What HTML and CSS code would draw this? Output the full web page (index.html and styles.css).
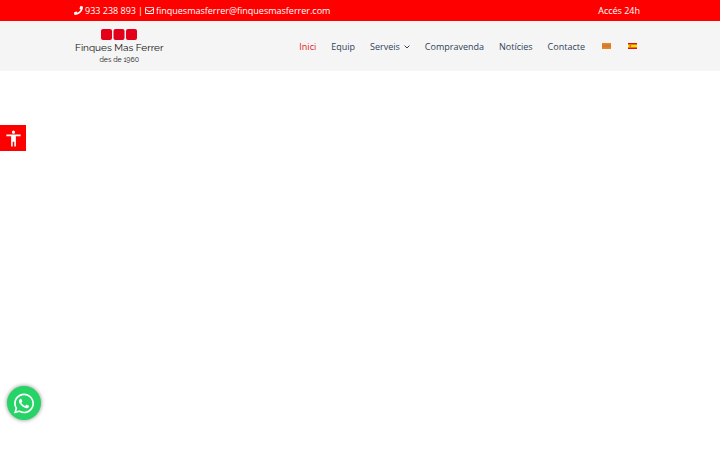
FILE: index.html
```html
<!DOCTYPE html>
<html lang="ca">
<head>
<meta charset="utf-8">
<meta name="viewport" content="width=device-width, initial-scale=1">
<title>Finques Mas Ferrer</title>
<link rel="stylesheet" href="styles.css">
</head>
<body>
<div class="topbar">
  <div class="contact">
    <a href="tel:933238893"><svg class="icon" viewBox="0 0 512 512" aria-hidden="true"><path d="M493.4 24.6l-104-24c-11.3-2.6-22.9 3.3-27.5 13.9l-48 112c-4.2 9.8-1.4 21.3 6.9 28l60.6 49.6c-36 76.7-98.900 140.500-177.200 177.200l-49.600-60.600c-6.800-8.300-18.200-11.100-28-6.900l-112 48C3.900 366.500-2 378.100.6 389.400l24 104C27.100 504.200 36.700 512 48 512c256.100 0 464-207.500 464-464 0-11.200-7.700-20.900-18.600-23.400z"/></svg>933 238 893</a>
    <span>|</span>
    <a href="mailto:finquesmasferrer@finquesmasferrer.com"><svg class="icon" viewBox="0 0 512 512" aria-hidden="true"><path d="M464 64H48C21.500 64 0 85.500 0 112v288c0 26.500 21.500 48 48 48h416c26.500 0 48-21.500 48-48V112c0-26.500-21.500-48-48-48zm0 48v40.800c-22.400 18.300-58.200 46.700-134.600 106.500-16.800 13.200-50.200 45.100-73.400 44.700-23.200.4-56.600-31.500-73.400-44.700C106.200 199.500 70.400 171.100 48 152.800V112h416zM48 400V214.400c22.900 18.300 55.400 43.900 104.900 82.600 21.900 17.200 60.100 55.200 103.100 55 42.700.2 80.500-37.200 103.100-54.900 49.500-38.800 82-64.400 104.900-82.700V400H48z"/></svg>finquesmasferrer@finquesmasferrer.com</a>
  </div>
  <a href="#acces">Accés 24h</a>
</div>
<header class="header">
  <a class="logo" href="#inici">
    <svg class="logo-mark" viewBox="0 0 36 11" aria-hidden="true"><rect width="11" height="11" rx="2"/><rect x="12.500" width="11" height="11" rx="2"/><rect x="25" width="11" height="11" rx="2"/></svg>
    <span class="logo-name">Finques Mas Ferrer</span>
    <span class="logo-since">des de 1960</span>
  </a>
  <nav class="nav">
    <a class="current" href="#inici">Inici</a>
    <a href="#equip">Equip</a>
    <a href="#serveis">Serveis<svg class="chevron" viewBox="0 0 6 4" aria-hidden="true"><path d="M.6.6L3 3 5.400.6"/></svg></a>
    <a href="#compravenda">Compravenda</a>
    <a href="#noticies">Notícies</a>
    <a href="#contacte">Contacte</a>
    <span class="languages">
      <a href="#ca" aria-label="Català"><svg class="flag" viewBox="0 0 9 6" aria-hidden="true"><path fill="#e9a02c" d="M0 0h9v6H0z"/><path stroke="#cf5a28" stroke-width=".67" d="M0 1h9M0 2.330h9M0 3.670h9M0 5h9"/></svg></a>
      <a href="#es" aria-label="Español"><svg class="flag" viewBox="0 0 9 6" aria-hidden="true"><path fill="#d8141c" d="M0 0h9v6H0z"/><path fill="#ffe100" d="M0 1.500h9v3H0z"/><path fill="#c77a28" d="M1.500 2h1.600v2H1.500z"/></svg></a>
    </span>
  </nav>
</header>
<main></main>
<button class="accessibility" type="button" aria-label="Accessibilitat"><svg viewBox="0 0 24 24" aria-hidden="true"><path d="M12 2a2 2 0 1 1 0 4 2 2 0 0 1 0-4zm9 7h-6v13h-2v-6h-2v6H9V9H3V7h18v2z"/></svg></button>
<a class="whatsapp" href="#whatsapp" aria-label="WhatsApp"><svg viewBox="0 0 448 512" aria-hidden="true"><path d="M380.900 97.100C339 55.100 283.200 32 223.900 32c-122.400 0-222 99.600-222 222 0 39.100 10.200 77.300 29.600 111L0 480l117.700-30.900c32.400 17.700 68.900 27 106.100 27h.1c122.300 0 224.100-99.600 224.100-222 0-59.300-25.200-115-67.100-157zm-157 341.600c-33.200 0-65.700-8.900-94-25.700l-6.700-4-69.800 18.300L72 359.200l-4.400-7c-18.500-29.400-28.200-63.300-28.200-98.200 0-101.700 82.800-184.500 184.600-184.500 49.300 0 95.600 19.200 130.400 54.100 34.800 34.900 56.200 81.200 56.100 130.500 0 101.800-84.900 184.600-186.600 184.600zm101.200-138.200c-5.500-2.800-32.800-16.200-37.900-18-5.100-1.900-8.800-2.800-12.500 2.800-3.700 5.600-14.300 18-17.600 21.800-3.200 3.700-6.500 4.200-12 1.400-32.600-16.300-54-29.100-75.500-66-5.700-9.800 5.700-9.100 16.300-30.300 1.800-3.700.9-6.900-.5-9.700-1.400-2.800-12.500-30.100-17.100-41.200-4.500-10.800-9.100-9.300-12.500-9.500-3.200-.2-6.900-.2-10.600-.2-3.700 0-9.700 1.400-14.800 6.900-5.100 5.600-19.400 19-19.400 46.300 0 27.300 19.900 53.700 22.600 57.400 2.800 3.700 39.100 59.700 94.800 83.800 35.200 15.200 49 16.500 66.600 13.900 10.700-1.600 32.800-13.400 37.400-26.400 4.600-13 4.600-24.100 3.200-26.400-1.300-2.500-5-3.900-10.500-6.600z"/></svg></a>
</body>
</html>
```
FILE: styles.css
```css
body {
  margin: 0;
  background: #fff;
  color: #2f4358;
  font: 9px/21px "Open Sans", "Noto Sans", sans-serif;
}

a {
  color: inherit;
  text-decoration: none;
}

.topbar,
.header {
  display: flex;
  align-items: center;
  justify-content: space-between;
  padding: 0 80px 0 74px;
}

.topbar {
  background: #f00;
  color: #fff;
}

.contact,
.contact a {
  display: flex;
  align-items: center;
  gap: 2px;
}

.icon {
  width: 9px;
  height: 9px;
  fill: currentColor;
}

.header {
  min-height: 50px;
  background: #f5f5f5;
}

.logo {
  display: flex;
  flex-direction: column;
  align-items: center;
  padding: 2px 0 0 1px;
  color: #111;
  font-family: Raleway, Lato, sans-serif;
}

.logo-mark {
  width: 36px;
  height: 11px;
  fill: #e2001a;
}

.logo-name {
  margin-top: 1px;
  font-size: 10px;
  line-height: 14px;
}

.logo-since {
  font-size: 7px;
  line-height: 10px;
}

.nav,
.nav a {
  display: flex;
  align-items: center;
}

.nav {
  gap: 15px;
  padding-right: 3px;
}

.nav .current {
  color: #e02020;
}

.languages {
  display: flex;
  gap: 17px;
  margin-left: 2px;
}

.chevron {
  width: 6px;
  height: 4px;
  margin: 2px 0 0 4px;
  fill: none;
  stroke: currentColor;
  stroke-width: 1;
}

.flag {
  width: 9px;
  height: 6px;
}

.accessibility {
  position: fixed;
  top: 125px;
  left: 0;
  display: grid;
  place-items: center;
  width: 26px;
  height: 26px;
  padding: 0;
  border: 0;
  background: #f00;
}

.accessibility svg {
  width: 19px;
  height: 19px;
  fill: #fff;
}

.whatsapp {
  position: fixed;
  bottom: 30px;
  left: 7px;
  display: grid;
  place-items: center;
  width: 34px;
  height: 34px;
  border-radius: 50%;
  background: #25d366;
  box-shadow: 0 0 4px #888;
}

.whatsapp svg {
  width: 20px;
  height: 23px;
  fill: #fff;
}
```
